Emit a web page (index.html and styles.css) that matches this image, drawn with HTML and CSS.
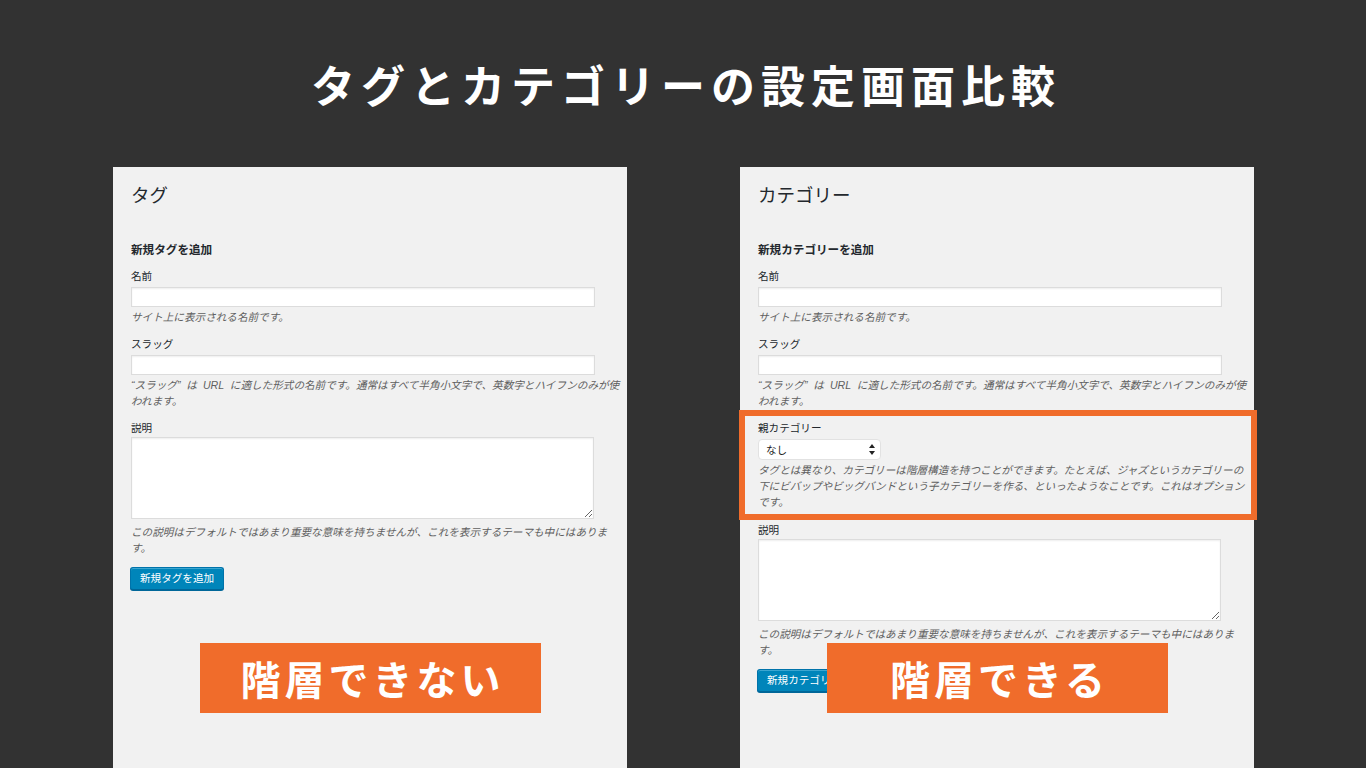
FILE: index.html
```html
<!DOCTYPE html>
<html lang="ja">
<head>
<meta charset="utf-8">
<title>タグとカテゴリーの設定画面比較</title>
<link rel="stylesheet" href="styles.css">
</head>
<body>
<header class="header">
  <h1 class="title">タグとカテゴリーの設定画面比較</h1>
</header>
<main class="compare">
  <section class="panel">
    <h2 class="panel-title">タグ</h2>
    <h3 class="form-title">新規タグを追加</h3>
    <div class="field">
      <label class="label">名前</label>
      <input class="input" type="text">
      <p class="hint">サイト上に表示される名前です。</p>
    </div>
    <div class="field">
      <label class="label">スラッグ</label>
      <input class="input" type="text">
      <p class="hint">“スラッグ” は URL に適した形式の名前です。通常はすべて半角小文字で、英数字とハイフンのみが使われます。</p>
    </div>
    <div class="field">
      <label class="label">説明</label>
      <textarea class="textarea"></textarea>
      <p class="hint hint-area">この説明はデフォルトではあまり重要な意味を持ちませんが、これを表示するテーマも中にはあります。</p>
    </div>
    <button class="button" type="button">新規タグを追加</button>
    <div class="badge">階層できない</div>
  </section>

  <section class="panel">
    <h2 class="panel-title">カテゴリー</h2>
    <h3 class="form-title">新規カテゴリーを追加</h3>
    <div class="field">
      <label class="label">名前</label>
      <input class="input" type="text">
      <p class="hint">サイト上に表示される名前です。</p>
    </div>
    <div class="field field-tight">
      <label class="label">スラッグ</label>
      <input class="input" type="text">
      <p class="hint">“スラッグ” は URL に適した形式の名前です。通常はすべて半角小文字で、英数字とハイフンのみが使われます。</p>
    </div>
    <div class="highlight">
      <label class="label">親カテゴリー</label>
      <div class="select">
        <span>なし</span>
        <svg class="select-arrows" width="6" height="11" viewBox="0 0 6 11"><path d="M3 0 L6 4 L0 4 Z M3 11 L6 7 L0 7 Z" fill="#222"/></svg>
      </div>
      <p class="hint">タグとは異なり、カテゴリーは階層構造を持つことができます。たとえば、ジャズというカテゴリーの下にビバップやビッグバンドという子カテゴリーを作る、といったようなことです。これはオプションです。</p>
    </div>
    <div class="field field-after">
      <label class="label">説明</label>
      <textarea class="textarea"></textarea>
      <p class="hint hint-area">この説明はデフォルトではあまり重要な意味を持ちませんが、これを表示するテーマも中にはあります。</p>
    </div>
    <button class="button" type="button">新規カテゴリーを追加</button>
    <div class="badge">階層できる</div>
  </section>
</main>
</body>
</html>
```

FILE: styles.css
```css
* { box-sizing: border-box; }

html, body {
  margin: 0;
  padding: 0;
}

body {
  width: 1366px;
  height: 768px;
  overflow: hidden;
  background: #323232;
  font-family: "Liberation Sans", "Noto Sans CJK JP", sans-serif;
  color: #23282d;
}

.header {
  height: 167px;
  display: flex;
  align-items: center;
  justify-content: center;
}

.title {
  margin: 0;
  padding-left: 6px;
  font-family: "Noto Sans CJK JP", sans-serif;
  font-weight: 700;
  font-size: 44px;
  line-height: 60px;
  letter-spacing: 6px;
  color: #ffffff;
}

.compare {
  display: flex;
  gap: 113px;
  padding-left: 113px;
}

.panel {
  position: relative;
  width: 514px;
  height: 601px;
  background: #f1f1f1;
  padding: 15px 6px 0 18px;
}

.panel-title {
  margin: 0;
  font-family: "Noto Sans CJK JP", sans-serif;
  font-weight: 400;
  font-size: 18.5px;
  line-height: 24px;
  color: #23282d;
}

.form-title {
  margin: 35px 0 11px;
  font-family: "Noto Sans CJK JP", sans-serif;
  font-weight: 700;
  font-size: 11.6px;
  line-height: 16px;
  color: #23282d;
}

.field {
  width: 490px;
  margin-bottom: 11px;
}

.field-tight { margin-bottom: 1px; }
.field-after { margin-top: 2px; }

.label {
  display: block;
  font-size: 10.6px;
  line-height: 16px;
  color: #23282d;
}

.input {
  display: block;
  width: 464px;
  height: 20px;
  margin: 3px 0 0;
  padding: 0 4px;
  border: 1px solid #dcdcdc;
  background: #ffffff;
  box-shadow: inset 0 1px 2px rgba(0,0,0,0.07);
  outline: none;
}

.textarea {
  display: block;
  width: 463px;
  height: 82px;
  margin: 1px 0 0;
  padding: 2px 4px;
  border: 1px solid #dcdcdc;
  background: #ffffff;
  box-shadow: inset 0 1px 2px rgba(0,0,0,0.07);
  font-family: inherit;
  outline: none;
}

.hint {
  margin: 2px 0 0;
  font-size: 10.6px;
  line-height: 16px;
  font-style: italic;
  word-spacing: 3px;
  color: #606060;
}

.hint-area { margin-top: 5px; }

.button {
  display: block;
  height: 23px;
  margin: 0 0 0 -1px;
  padding: 0 9px 1px;
  border: 1px solid #0073aa;
  border-bottom-color: #006799;
  border-radius: 3px;
  background: #0085ba;
  box-shadow: inset 0 1px 0 rgba(120,200,230,0.5), 0 1px 0 #006799;
  font-family: "Liberation Sans", "Noto Sans CJK JP", sans-serif;
  font-size: 10.6px;
  line-height: 20px;
  color: #ffffff;
  white-space: nowrap;
}

.highlight {
  width: 518px;
  margin: 0 0 0 -19px;
  padding: 4px 3px 4px 13px;
  border: 6px solid #f06c2b;
}

.select {
  display: flex;
  align-items: center;
  justify-content: space-between;
  width: 123px;
  height: 21px;
  margin-top: 3px;
  padding: 0 5px 0 7px;
  background: #ffffff;
  border: 1px solid #e2e2e2;
  border-radius: 4px;
  font-size: 10.6px;
  color: #222222;
}

.select-arrows { display: block; }

.highlight .hint { width: 490px; }

.badge {
  position: absolute;
  left: 87px;
  top: 476px;
  width: 341px;
  height: 70px;
  display: flex;
  align-items: center;
  justify-content: center;
  padding-left: 4px;
  background: #f06c2b;
  font-family: "Noto Sans CJK JP", sans-serif;
  font-weight: 700;
  font-size: 40px;
  letter-spacing: 4px;
  color: #ffffff;
}
```
